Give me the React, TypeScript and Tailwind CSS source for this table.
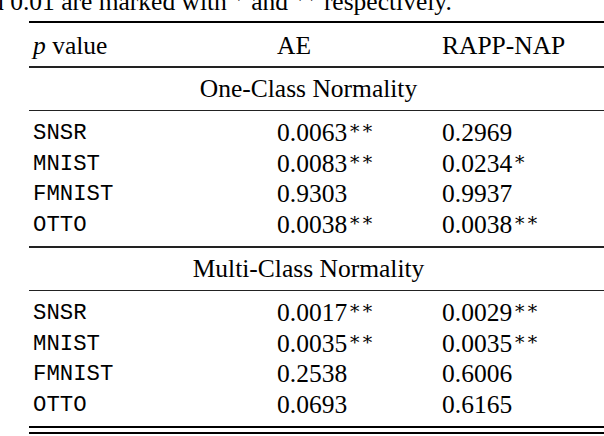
import React from 'react';

type Row = { name: string; ae: string; aeStars: string; rapp: string; rappStars: string };

const oneClass: Row[] = [
  { name: 'SNSR', ae: '0.0063', aeStars: '∗∗', rapp: '0.2969', rappStars: '' },
  { name: 'MNIST', ae: '0.0083', aeStars: '∗∗', rapp: '0.0234', rappStars: '∗' },
  { name: 'FMNIST', ae: '0.9303', aeStars: '', rapp: '0.9937', rappStars: '' },
  { name: 'OTTO', ae: '0.0038', aeStars: '∗∗', rapp: '0.0038', rappStars: '∗∗' },
];

const multiClass: Row[] = [
  { name: 'SNSR', ae: '0.0017', aeStars: '∗∗', rapp: '0.0029', rappStars: '∗∗' },
  { name: 'MNIST', ae: '0.0035', aeStars: '∗∗', rapp: '0.0035', rappStars: '∗∗' },
  { name: 'FMNIST', ae: '0.2538', aeStars: '', rapp: '0.6006', rappStars: '' },
  { name: 'OTTO', ae: '0.0693', aeStars: '', rapp: '0.6165', rappStars: '' },
];

const serif = "font-['Liberation_Serif','DejaVu_Serif',serif]";
const mono = "font-['Liberation_Mono','DejaVu_Sans_Mono',monospace]";

function Value({ value, stars }: { value: string; stars: string }) {
  return (
    <span>
      {value}
      {stars && <sup className="-top-[7px] ml-[1px] text-[19px]">{stars}</sup>}
    </span>
  );
}

function DataBlock({ rows }: { rows: Row[] }) {
  return (
    <div className="pt-[7px] pb-[6px]">
      {rows.map((r) => (
        <div key={r.name} className="grid h-[30.5px] grid-cols-[244px_165px_1fr] items-center pl-[4px] leading-[30px]">
          <span className={`${mono} text-[22.3px] text-black`}>{r.name}</span>
          <Value value={r.ae} stars={r.aeStars} />
          <Value value={r.rapp} stars={r.rappStars} />
        </div>
      ))}
    </div>
  );
}

function SectionRow({ title }: { title: string }) {
  return (
    <div className="flex h-[42px] items-center justify-center pr-[16px] pt-[2px]">{title}</div>
  );
}

export default function App() {
  return (
    <div className={`${serif} h-[436px] w-[604px] overflow-hidden bg-white text-[25.5px] text-black`}>
      <div className="h-[21px] overflow-hidden">
        <div className="-mt-[13px] ml-[-33px] whitespace-nowrap leading-[30px]">
          and 0.01 are marked with <sup className="text-[17px]">∗</sup> and <sup className="text-[17px]">∗∗</sup> respectively.
        </div>
      </div>

      <div className="ml-[29px] w-[575px]">
        <div className="h-[2px] bg-black" />
        <div className="grid h-[43px] grid-cols-[244px_165px_1fr] items-center pl-[4px] pt-[3px]">
          <span>
            <i>p</i> value
          </span>
          <span>AE</span>
          <span>RAPP-NAP</span>
        </div>
        <div className="h-[1.5px] bg-[#222]" />
        <SectionRow title="One-Class Normality" />
        <div className="h-[1.5px] bg-[#222]" />
        <DataBlock rows={oneClass} />
        <div className="h-[1.5px] bg-[#222]" />
        <SectionRow title="Multi-Class Normality" />
        <div className="h-[1.5px] bg-[#222]" />
        <DataBlock rows={multiClass} />
        <div className="h-[2px] bg-black" />
        <div className="h-[4px]" />
        <div className="h-[2px] bg-black" />
      </div>
    </div>
  );
}
